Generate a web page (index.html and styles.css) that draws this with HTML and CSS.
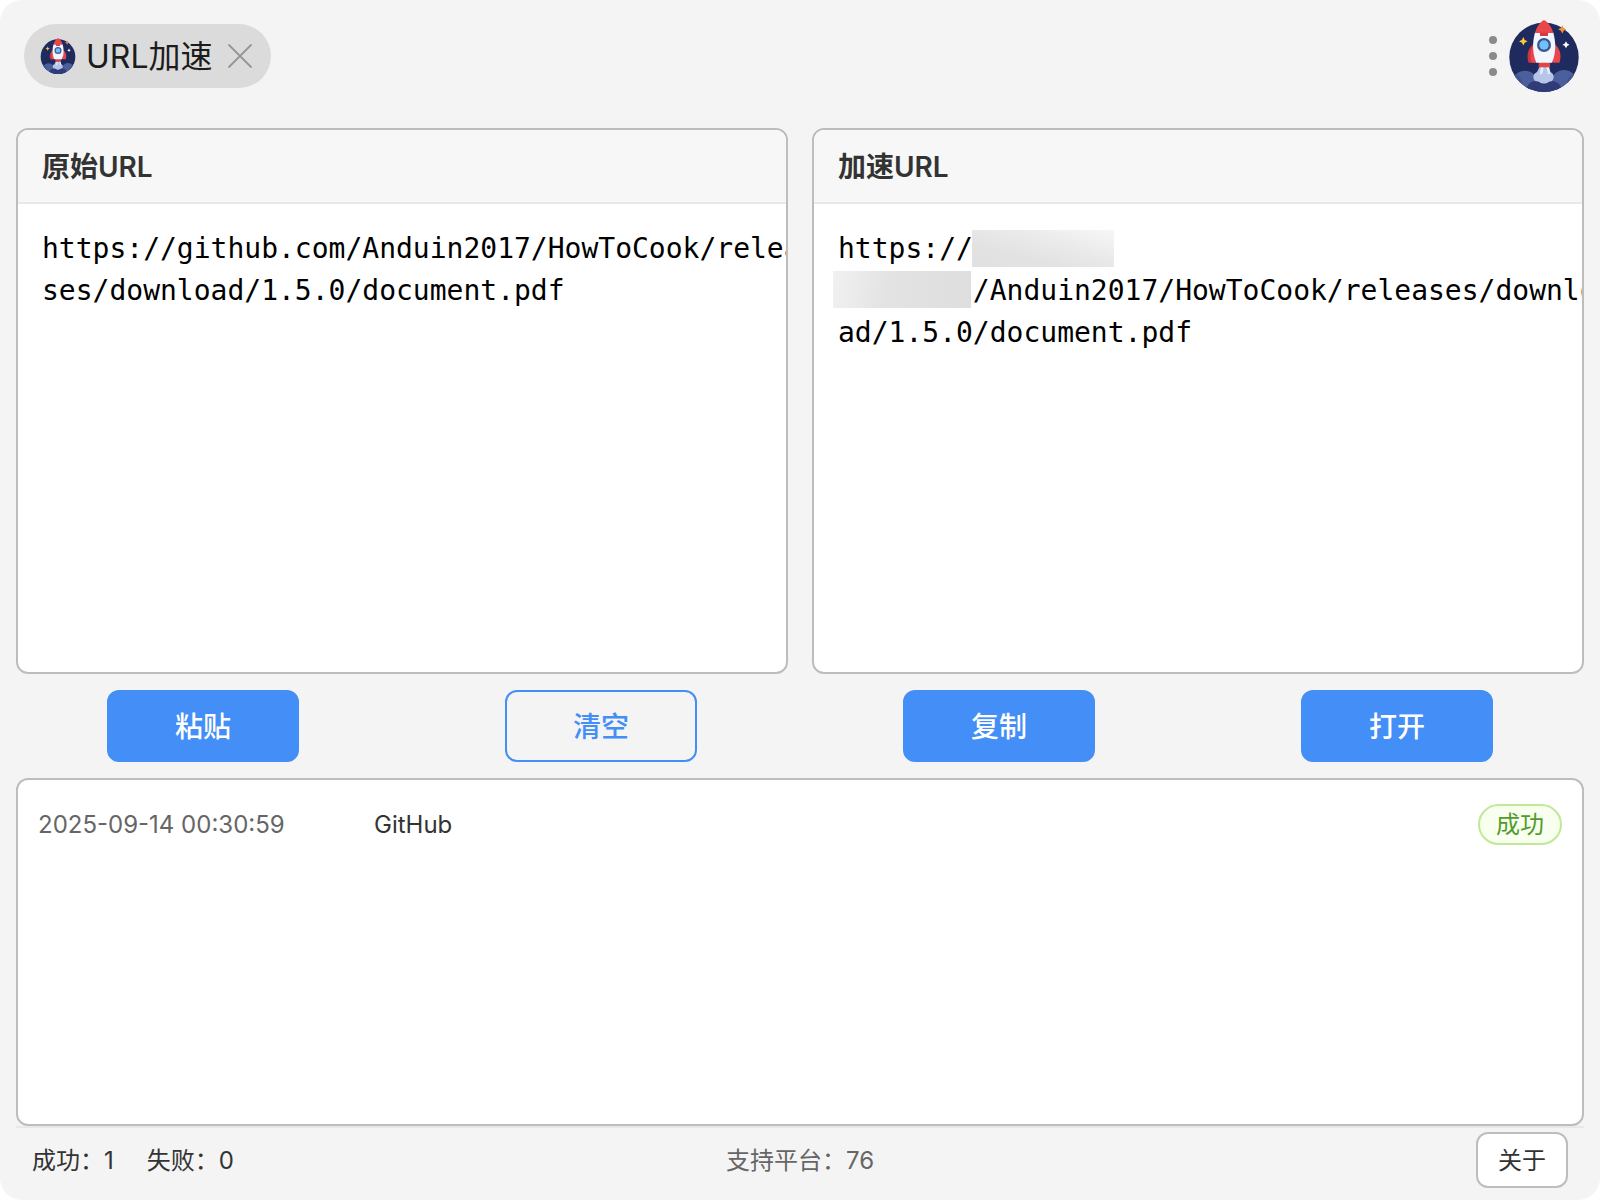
FILE: index.html
```html
<!DOCTYPE html>
<html lang="zh-CN">
<head>
  <meta charset="UTF-8">
  <title>URL加速</title>
  <link rel="stylesheet" href="styles.css">
</head>
<body>

  <!-- Rocket logo, shared by the tab and the avatar -->
  <svg class="sprite" aria-hidden="true">
    <symbol id="rocket" viewBox="0 0 72 72">
      <clipPath id="disc"><circle cx="36" cy="37.3" r="34.7"/></clipPath>
      <circle cx="36" cy="37.3" r="34.7" fill="#1f2b5f"/>
      <g clip-path="url(#disc)">
        <circle cx="17" cy="63.500" r="12.800" fill="#4a5f9c"/>
        <circle cx="56" cy="63" r="13" fill="#4a5f9c"/>
        <circle cx="5" cy="63" r="9" fill="#41548f"/>
        <circle cx="68" cy="63" r="9" fill="#41548f"/>
      </g>
      <path d="M31.500 47h9.500l1.500 5q4 2 3 6.500l-3 5H28.500l-3-5q-1-4.500 3.500-6.500z" fill="#b7c5e9"/>
      <path d="M33 47h2.500l-1 6.500-2.500 1zM38.500 47H41l1 6.500-2 1z" fill="#e8effc"/>
      <g clip-path="url(#disc)" fill="#2f3c79">
        <circle cx="27.500" cy="70" r="9"/>
        <circle cx="44.500" cy="70" r="9"/>
        <circle cx="36" cy="73" r="9"/>
        <circle cx="21" cy="75" r="8"/>
        <circle cx="51" cy="75" r="8"/>
      </g>
      <path d="M25.500 24c-5 4-7.500 10-5 18.700h7z" fill="#c9363f"/>
      <path d="M25.500 25c-3 5-4 11-2 17.700h5z" fill="#e9474b"/>
      <path d="M46.500 24c5 4 7.500 10 5 18.700h-7z" fill="#e9474b"/>
      <path d="M30.700 42h11.300v5.300H30.700z" fill="#e0434a"/>
      <path d="M27 12.500h18.300c2.600 10 3 20-1.300 30.200H28.300C24 32.500 24.400 22.500 27 12.500z" fill="#f2f6fd"/>
      <path d="M36 0c4.500 2.500 8 7.500 9.300 13H27C28.300 7.500 31.500 2.500 36 0z" fill="#e9474b"/>
      <path d="M32 12.500h8v3.500h-8z" fill="#d23c45"/>
      <circle cx="36" cy="25" r="7" fill="#3d5691"/>
      <circle cx="36" cy="25" r="4.700" fill="#70bff9"/>
      <path d="M15.300 17l1.400 2.900 2.900 1.400-2.900 1.400-1.400 2.900-1.400-2.900-2.900-1.400 2.900-1.400z" fill="#fcc93c"/>
      <path d="M54.300 5.200l1.400 2.700 2.800 1.400-2.800 1.400-1.400 2.800-1.400-2.800-2.800-1.400 2.800-1.400z" fill="#ee9440"/>
      <path d="M58 21.200l1.200 2.300 2.300 1.200-2.300 1.200-1.200 2.300-1.200-2.300-2.300-1.200 2.300-1.200z" fill="#fff"/>
    </symbol>
  </svg>

  <div class="window">

    <header class="topbar">
      <div class="tab">
        <svg class="tab-icon"><use href="#rocket"/></svg>
        <span class="tab-title">URL加速</span>
        <button class="tab-close" type="button" aria-label="关闭">
          <svg viewBox="0 0 24 24" width="24" height="24"><path d="M1 1l22 22M23 1L1 23" stroke="#969696" stroke-width="1.800" stroke-linecap="round"/></svg>
        </button>
      </div>
      <div class="topbar-right">
        <button class="more" type="button" aria-label="更多">
          <svg viewBox="0 0 8 40" width="8" height="40" fill="#8a8a8a">
            <circle cx="4" cy="4" r="4"/>
            <circle cx="4" cy="20" r="4"/>
            <circle cx="4" cy="36" r="4"/>
          </svg>
        </button>
        <svg class="avatar"><use href="#rocket"/></svg>
      </div>
    </header>

    <main class="content">
      <div class="panels">
        <section class="panel">
          <label class="panel-title" for="source">原始URL</label>
          <div class="panel-body">
            <textarea id="source" class="url-text" spellcheck="false">https://github.com/Anduin2017/HowToCook/releases/download/1.5.0/document.pdf</textarea>
          </div>
        </section>
        <section class="panel">
          <label class="panel-title" for="result">加速URL</label>
          <div class="panel-body">
            <textarea id="result" class="url-text" spellcheck="false" readonly>https://
        /Anduin2017/HowToCook/releases/download/1.5.0/document.pdf</textarea>
            <span class="mask mask-first"></span>
            <span class="mask mask-second"></span>
          </div>
        </section>
      </div>

      <div class="actions">
        <button class="btn" type="button">粘贴</button>
        <button class="btn btn-outline" type="button">清空</button>
        <button class="btn" type="button">复制</button>
        <button class="btn" type="button">打开</button>
      </div>

      <ul class="log">
        <li class="log-row">
          <time class="log-time">2025-09-14 00:30:59</time>
          <span class="log-name">GitHub</span>
          <span class="badge">成功</span>
        </li>
      </ul>
    </main>

    <footer class="status">
      <div class="counts">
        <span>成功：1</span>
        <span>失败：0</span>
      </div>
      <span class="platforms">支持平台：76</span>
      <button class="about" type="button">关于</button>
    </footer>

  </div>

</body>
</html>
```

FILE: styles.css
```css
:root {
  --blue: #448ef7;
  --line: #bdbdbd;
  --bg: #f4f4f4;
}

* {
  box-sizing: border-box;
}

body {
  margin: 0;
  background: #fff;
  color: #333;
  font-family: Inter, "Noto Sans CJK SC", sans-serif;
  font-size: 24px;
  line-height: 33px;
}

button {
  margin: 0;
  padding: 0;
  border: none;
  background: none;
  font: inherit;
  color: inherit;
  cursor: pointer;
}

svg {
  display: block;
}

.sprite {
  position: absolute;
  width: 0;
  height: 0;
}

.window {
  display: flex;
  flex-direction: column;
  min-height: 100vh;
  background: var(--bg);
  border-radius: 22px;
}

/* Top bar */
.topbar {
  display: flex;
  align-items: center;
  justify-content: space-between;
  height: 112px;
  padding: 0 20px 0 24px;
}

.tab {
  display: flex;
  align-items: center;
  height: 64px;
  padding: 0 19px 0 16px;
  border-radius: 32px;
  background: #dbdbdb;
}

.tab-icon {
  width: 36px;
  height: 36px;
}

.tab-title {
  margin: 0 15px 0 10px;
  padding-top: 2px;
  font-size: 32px;
  line-height: 40px;
  color: #1c1c1c;
}

.topbar-right {
  display: flex;
  align-items: center;
  gap: 11px;
}

.avatar {
  width: 72px;
  height: 72px;
}

/* URL panels */
.content {
  display: flex;
  flex: 1;
  flex-direction: column;
  gap: 16px;
  padding: 16px 16px 0;
}

.panels {
  display: grid;
  flex: 1;
  grid-template-columns: 1fr 1fr;
  gap: 24px;
}

.panel {
  display: flex;
  flex-direction: column;
  min-width: 0;
  border: 2px solid var(--line);
  border-radius: 12px;
  background: #fff;
  overflow: hidden;
}

.panel-title {
  padding: 17px 24px 15px;
  border-bottom: 2px solid #e8e8e8;
  background: #f7f7f7;
  font-size: 28px;
  font-weight: 600;
  line-height: 40px;
}

.panel-body {
  position: relative;
  flex: 1;
}

/* content-box keeps the text as wide as the panel, the end of a long line is cut */
.url-text {
  display: block;
  box-sizing: content-box;
  width: 100%;
  height: 126px;
  margin: 0;
  padding: 24px;
  border: none;
  outline: none;
  resize: none;
  overflow: hidden;
  background: transparent;
  color: #000;
  font-family: "DejaVu Sans Mono", monospace;
  font-size: 28px;
  line-height: 42px;
  word-break: break-all;
}

.mask {
  position: absolute;
  height: 37px;
}

.mask-first {
  top: 26px;
  left: 158px;
  width: 142px;
  background: linear-gradient(15deg, #e1e1e1, #e2e2e2 30%, #ebebeb 65%, #f7f7f7);
}

.mask-second {
  top: 67px;
  left: 19px;
  width: 138px;
  background: linear-gradient(100deg, #f1f1f1, #e3e3e3 40%, #dedede);
}

/* Buttons */
.actions {
  display: flex;
  justify-content: space-around;
  margin: 0 -12px;
}

.btn {
  width: 192px;
  height: 72px;
  padding-top: 2px;
  border: 2px solid var(--blue);
  border-radius: 12px;
  background: var(--blue);
  color: #fff;
  font-size: 28px;
  font-weight: 500;
}

.btn-outline {
  background: transparent;
  color: var(--blue);
}

/* Log */
.log {
  height: 29vh;
  margin: 0;
  padding: 24px 20px;
  border: 2px solid var(--line);
  border-radius: 12px;
  background: #fff;
  list-style: none;
}

.log-row {
  display: flex;
  align-items: center;
}

.log-time {
  width: 336px;
  color: #666;
}

.log-name {
  flex: 1;
}

.badge {
  padding: 2px 16px;
  border: 2px solid #bfe996;
  border-radius: 21px;
  background: #f8ffef;
  color: #519b2b;
}

/* Status bar */
.status {
  display: grid;
  grid-template-columns: 1fr auto 1fr;
  align-items: center;
  margin: 0 16px;
  padding: 4px 16px 12px;
  border-top: 2px solid #e8e8e8;
}

.counts {
  display: flex;
  gap: 33px;
}

.platforms {
  color: #666;
}

.about {
  justify-self: end;
  width: 92px;
  height: 56px;
  border: 2px solid var(--line);
  border-radius: 12px;
  background: #fff;
}
```
